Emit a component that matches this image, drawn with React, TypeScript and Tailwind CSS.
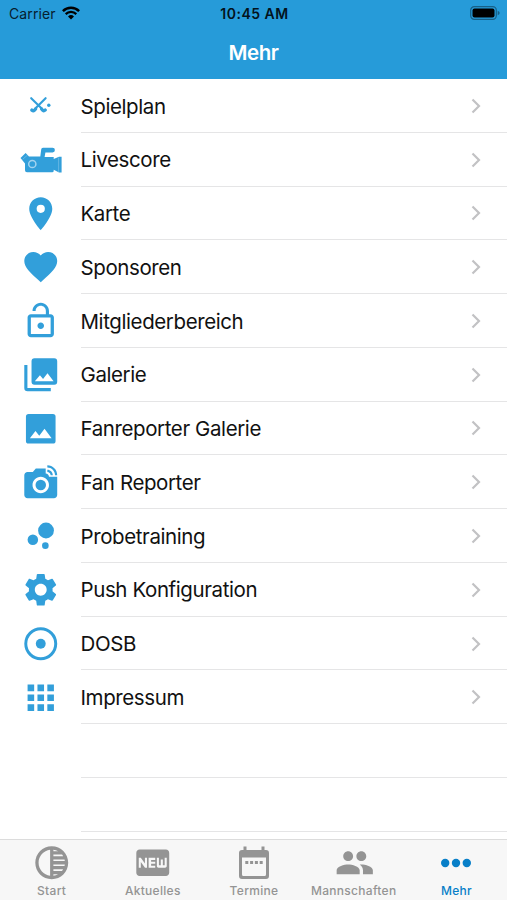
import type { ReactNode } from "react"
import {
  MdApps,
  MdBubbleChart,
  MdFavorite,
  MdFiberNew,
  MdLinkedCamera,
  MdLockOpen,
  MdPeople,
  MdPlace,
  MdSettings,
  MdTonality,
} from "react-icons/md"

const iconSize = "size-[39.5px]"

function HockeyIcon() {
  return (
    <svg viewBox="0 0 21 16" className="w-[21px] h-4 -mt-px" fill="none">
      <path
        d="m1.200 1.200 11 10.800M15.600 1.200 4.800 12"
        stroke="currentColor"
        strokeWidth="2.100"
        strokeLinecap="round"
      />
      <path
        d="M1.900 13.100Q4 14.800 5.600 12M15.200 13.100Q13.200 14.800 11.600 12"
        stroke="currentColor"
        strokeWidth="3.300"
        strokeLinecap="round"
      />
      <circle cx="18.800" cy="8.200" r="1.700" fill="currentColor" />
    </svg>
  )
}

function CamcorderIcon() {
  return (
    <svg viewBox="0 0 42 26" className="w-[42px] h-[26px]" fill="currentColor">
      <path d="M23 .8h9.600a2.200 2.200 0 0 1 0 4.600h-7.200L24.600 10h9.100v2l5.300-2.200h2.600v15.600H39l-5.300-2.600v.9a1.500 1.500 0 0 1-1.500 1.500H7A2 2 0 0 1 5 23.200v-6.800L.5 11 5.600 6 9 9.600h11.300l.9-7A1.900 1.900 0 0 1 23 .8Z" />
      <path d="m2.600 12.400 5-4.400M38.600 10.500v14.500" stroke="white" strokeWidth=".6" opacity=".4" />
      <circle cx="12.300" cy="17" r="3.600" fill="none" stroke="#a3d3ef" strokeWidth="1.500" />
    </svg>
  )
}

function GalleryIcon() {
  return (
    <svg viewBox="0 0 24 24" className={iconSize} fill="currentColor">
      <path
        fillRule="evenodd"
        d="M8.200 2h12A1.800 1.800 0 0 1 22 3.800v12.400a1.800 1.800 0 0 1-1.800 1.800h-12a1.800 1.800 0 0 1-1.800-1.800V3.800A1.800 1.800 0 0 1 8.200 2Zm.2 14h11.400l-3.700-4.900-2.700 3.500-1.900-2.300Z"
      />
      <path d="M2 6h1.900v14.100h14.200V22H4a2 2 0 0 1-2-2Z" />
    </svg>
  )
}

function PictureIcon() {
  return (
    <svg viewBox="0 0 24 24" className={iconSize} fill="currentColor">
      <path
        fillRule="evenodd"
        d="M4.600 3h14.800A1.600 1.600 0 0 1 21 4.600v14.800a1.600 1.600 0 0 1-1.600 1.600H4.600A1.600 1.600 0 0 1 3 19.400V4.600A1.600 1.600 0 0 1 4.600 3Zm.8 14.700h13.200l-4.300-5.700-3.200 4.200-2.300-2.800Z"
      />
    </svg>
  )
}

function TargetIcon() {
  return (
    <svg viewBox="0 0 24 24" className={iconSize}>
      <circle cx="12" cy="12" r="9.100" fill="none" stroke="currentColor" strokeWidth="1.800" />
      <circle cx="12" cy="12" r="3" fill="currentColor" />
    </svg>
  )
}

function CalendarIcon() {
  return (
    <svg viewBox="0 0 40 40" className="size-10" fill="currentColor">
      <path
        fillRule="evenodd"
        d="M9.500 3.500h3V7h15V3.500h3V7H32a3 3 0 0 1 3 3v23a3 3 0 0 1-3 3H8a3 3 0 0 1-3-3V10a3 3 0 0 1 3-3h1.500ZM8 14.500v17a1.500 1.500 0 0 0 1.500 1.500h21a1.500 1.500 0 0 0 1.500-1.500v-17Z"
      />
      <path d="M11.300 18h3v3h-3ZM16.100 18h3v3h-3ZM20.900 18h3v3h-3ZM25.700 18h3v3h-3Z" />
    </svg>
  )
}

function MoreIcon() {
  return (
    <svg viewBox="0 0 32 10" className="w-8 h-2.5" fill="currentColor">
      <circle cx="5.200" cy="5" r="4.200" />
      <circle cx="16" cy="5" r="4.200" />
      <circle cx="26.800" cy="5" r="4.200" />
    </svg>
  )
}

function Chevron() {
  return (
    <svg viewBox="0 0 10 16" className="w-2.5 h-4 mt-px text-[#c2c2c4]" fill="none">
      <path d="m1.500 1.500 6.500 6.500-6.500 6.500" stroke="currentColor" strokeWidth="2.200" />
    </svg>
  )
}

type Item = { label: string; icon: ReactNode }

const items: Item[] = [
  { label: "Spielplan", icon: <HockeyIcon /> },
  { label: "Livescore", icon: <CamcorderIcon /> },
  { label: "Karte", icon: <MdPlace className={iconSize} /> },
  { label: "Sponsoren", icon: <MdFavorite className={iconSize} /> },
  { label: "Mitgliederbereich", icon: <MdLockOpen className={iconSize} /> },
  { label: "Galerie", icon: <GalleryIcon /> },
  { label: "Fanreporter Galerie", icon: <PictureIcon /> },
  { label: "Fan Reporter", icon: <MdLinkedCamera className={iconSize} /> },
  { label: "Probetraining", icon: <MdBubbleChart className={iconSize} /> },
  { label: "Push Konfiguration", icon: <MdSettings className={iconSize} /> },
  { label: "DOSB", icon: <TargetIcon /> },
  { label: "Impressum", icon: <MdApps className={iconSize} /> },
]

const tabs = [
  { label: "Start", icon: <MdTonality className={iconSize} /> },
  { label: "Aktuelles", icon: <MdFiberNew className={iconSize} /> },
  { label: "Termine", icon: <CalendarIcon /> },
  { label: "Mannschaften", icon: <MdPeople className={iconSize} />, labelClass: "pr-[3px]" },
  { label: "Mehr", icon: <MoreIcon />, active: true },
]

function StatusBar() {
  return (
    <div className="grid grid-cols-3 items-center h-[27px] pl-[9px] pr-[7px] text-[#06202f]">
      <div className="flex items-center gap-1.5 text-[14px] tracking-[0.1px]">
        <span>Carrier</span>
        <svg viewBox="0 0 18 14" className="w-[18px] h-3.5 -mt-px text-black" fill="none" stroke="currentColor">
          <path d="M.9 5.100a11.600 11.600 0 0 1 16.200 0" strokeWidth="2.500" />
          <path d="M3.700 8.100a7.500 7.500 0 0 1 10.600 0" strokeWidth="2.200" />
          <path d="M9 13.600 6 10.500a4.300 4.300 0 0 1 6 0Z" fill="currentColor" stroke="none" />
        </svg>
      </div>
      <div className="text-center text-[14px] font-semibold tracking-[0.5px] text-[#03131d] whitespace-nowrap">
        10:45 AM
      </div>
      <svg viewBox="0 0 30 14" className="w-[30px] h-3.5 -mt-px justify-self-end">
        <rect x=".7" y=".7" width="25.600" height="12.600" rx="3.600" fill="none" stroke="#176087" strokeWidth="1.200" />
        <rect x="2.500" y="2.500" width="22" height="9" rx="2" fill="black" />
        <path d="M27.700 4.800q2 .7 2 2.200t-2 2.200Z" fill="#176087" />
      </svg>
    </div>
  )
}

export default function App() {
  return (
    <div className="flex flex-col w-[507px] h-[900px] overflow-hidden bg-white font-[Inter,'Liberation_Sans',sans-serif]">
      <header className="h-[79px] shrink-0 bg-[#269bd9]">
        <StatusBar />
        <h1 className="h-[52px] text-center text-[20.500px] leading-[52px] font-semibold tracking-[-0.4px] text-white">
          Mehr
        </h1>
      </header>

      <main className="flex-1 overflow-hidden">
        {items.map((item) => (
          <div key={item.label} className="flex h-[53.780px]">
            <div className="flex w-[81px] shrink-0 items-center justify-center text-[#329fda]">
              {item.icon}
            </div>
            <div className="flex flex-1 items-center justify-between border-b border-[#e5e5e6] pr-[26px]">
              <span className="-ml-[0.5px] pt-[3px] text-[20.500px] tracking-[-0.4px] text-[#111]">
                {item.label}
              </span>
              <Chevron />
            </div>
          </div>
        ))}
        <div className="ml-[81px] h-[53.780px] border-b border-[#e5e5e6]" />
        <div className="ml-[81px] h-[53.780px] border-b border-[#e5e5e6]" />
      </main>

      <nav className="flex h-[61px] shrink-0 border-t border-[#dcdcdc] bg-[#f7f7f7] pl-px">
        {tabs.map((tab) => (
          <div
            key={tab.label}
            className={`flex flex-1 flex-col items-center pt-[3px] ${
              tab.active ? "text-[#087fc8]" : "text-[#949494]"
            }`}
          >
            <div className="flex h-10 items-center">{tab.icon}</div>
            <span
              className={`text-[12px] leading-4 font-medium tracking-[0.3px] ${tab.labelClass ?? ""}`}
            >
              {tab.label}
            </span>
          </div>
        ))}
      </nav>
    </div>
  )
}
